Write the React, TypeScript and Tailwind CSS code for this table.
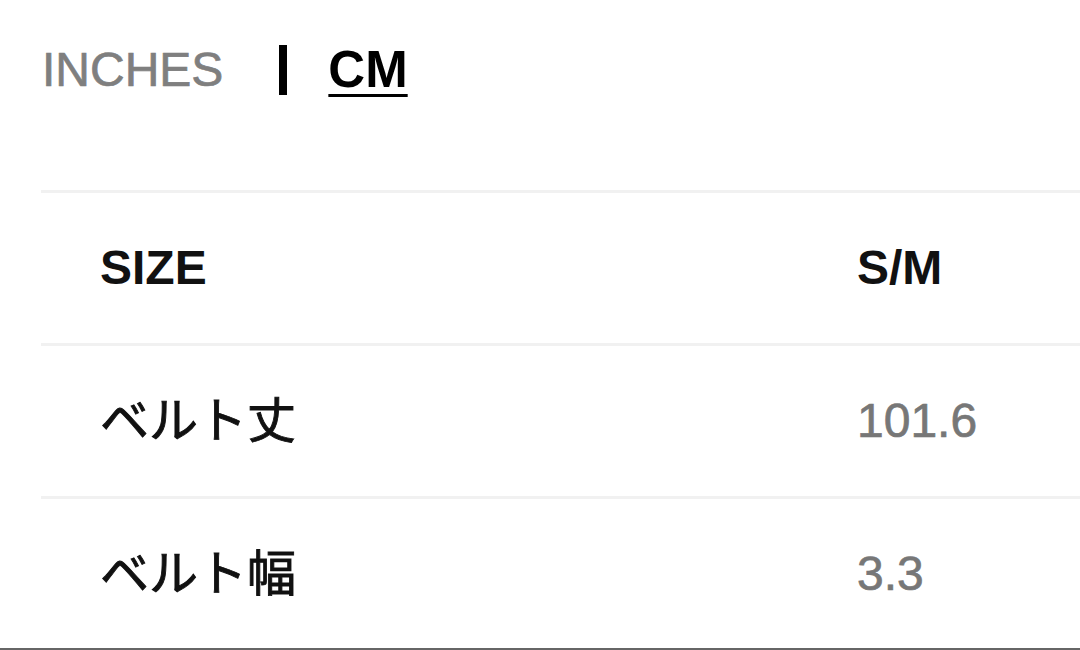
import React from "react";

const rows = [
  { label: "SIZE", value: "S/M", head: true },
  { label: "ベルト丈", value: "101.6" },
  { label: "ベルト幅", value: "3.3" },
];

export default function App() {
  return (
    <div
      className="w-[1080px] h-[650px] bg-white overflow-hidden flex flex-col"
      style={{ fontFamily: '"Liberation Sans", "Noto Sans CJK JP", Arial, sans-serif' }}
    >
      <div className="mt-[45px] h-[50px] flex items-center">
        <span className="ml-[42px] text-[48px] leading-[48px] text-[#7f7f7f] [-webkit-text-stroke:0.7px]">
          INCHES
        </span>
        <span className="ml-[56px] w-[8px] h-[50px] bg-black" />
        <span className="ml-[41px] text-[51px] leading-[48px] font-bold text-black underline decoration-[3px] underline-offset-[7px]">
          CM
        </span>
      </div>
      <div className="mt-[95px] ml-[41px] border-t-[3px] border-[#f1f1f1]">
        {rows.map((r, i) => (
          <div
            key={i}
            className={
              i < rows.length - 1
                ? "grid grid-cols-[757px_1fr] h-[153px] border-b-[3px] border-[#f1f1f1] items-center"
                : "grid grid-cols-[757px_1fr] h-[149px] items-center"
            }
          >
            <div
              className={
                r.head
                  ? "pl-[59px] text-[48px] leading-[48px] font-bold text-[#111]"
                  : "pl-[59px] text-[49px] leading-[48px] text-[#111] [-webkit-text-stroke:0.9px]"
              }
            >
              {r.label}
            </div>
            <div
              className={
                r.head
                  ? "pl-[59px] text-[48px] leading-[48px] font-bold text-[#111]"
                  : "pl-[59px] text-[48px] leading-[48px] text-[#777777] [-webkit-text-stroke:0.7px]"
              }
            >
              {r.value}
            </div>
          </div>
        ))}
      </div>
      <div className="h-[2px] bg-[#666666]" />
    </div>
  );
}
